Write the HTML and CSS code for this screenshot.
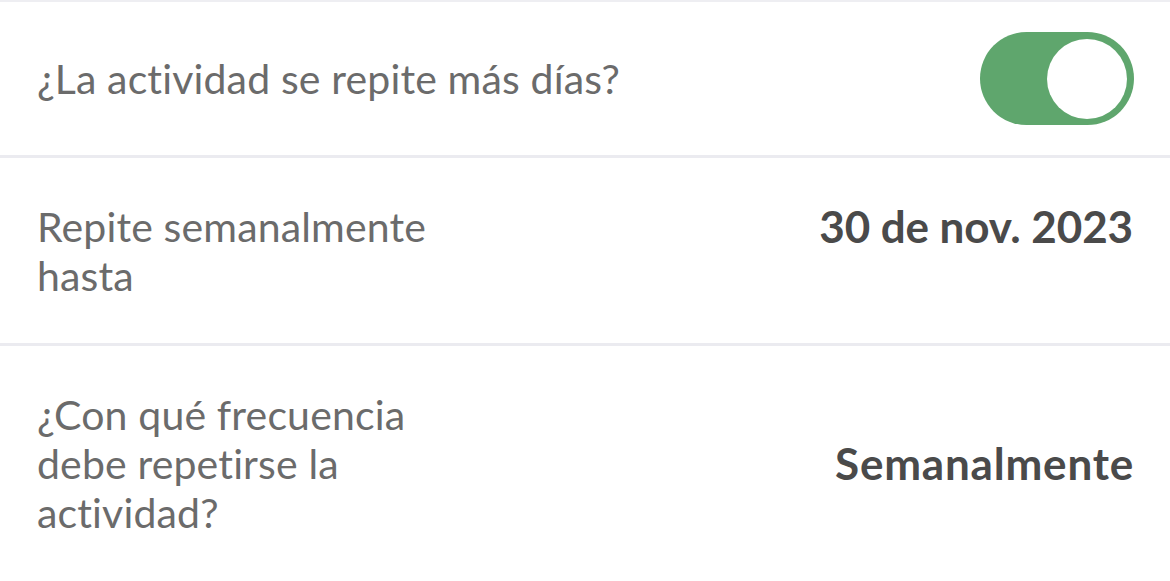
FILE: index.html
```html
<!DOCTYPE html>
<html lang="es">
<head>
<meta charset="utf-8">
<link rel="stylesheet" href="styles.css">
</head>
<body>
<div class="list">
  <div class="row row-toggle">
    <div class="label wide">¿La actividad se repite más días?</div>
    <div class="switch on"><div class="knob"></div></div>
  </div>
  <div class="row row-date">
    <div class="label">Repite semanalmente hasta</div>
    <div class="value">30 de nov. 2023</div>
  </div>
  <div class="row row-freq">
    <div class="label">¿Con qué frecuencia debe repetirse la actividad?</div>
    <div class="value spaced">Semanalmente</div>
  </div>
</div>
</body>
</html>
```
FILE: styles.css
```css
html, body {
  margin: 0;
  padding: 0;
  background: #ffffff;
}
body {
  font-family: "Lato", "Liberation Sans", sans-serif;
  width: 1170px;
  height: 581px;
  overflow: hidden;
}
.list {
  border-top: 2px solid #eeeef2;
}
.row {
  display: flex;
  justify-content: space-between;
  padding: 0 37px;
  border-bottom: 3px solid #ebebf0;
  box-sizing: border-box;
}
.label {
  font-size: 41px;
  line-height: 49px;
  letter-spacing: 0.15px;
  color: #6b6b6b;
  max-width: 440px;
}
.label.wide {
  max-width: none;
}
.value {
  font-size: 44px;
  line-height: 49px;
  font-weight: 700;
  color: #4a4a4a;
  letter-spacing: -0.1px;
}
.value.spaced {
  letter-spacing: 0.8px;
  margin-right: -1px;
}
.row-toggle {
  height: 156px;
  align-items: center;
  padding-right: 36px;
}
.row-date {
  height: 188px;
  align-items: flex-start;
  padding-top: 44px;
}
.row-freq {
  height: 240px;
  align-items: center;
  border-bottom: none;
  padding-bottom: 6px;
}
.switch {
  width: 154px;
  height: 93px;
  border-radius: 47px;
  background: #5fa66d;
  display: flex;
  align-items: center;
  justify-content: flex-end;
  padding: 0 7px;
  box-sizing: border-box;
}
.knob {
  width: 80px;
  height: 80px;
  border-radius: 50%;
  background: #ffffff;
}
```
